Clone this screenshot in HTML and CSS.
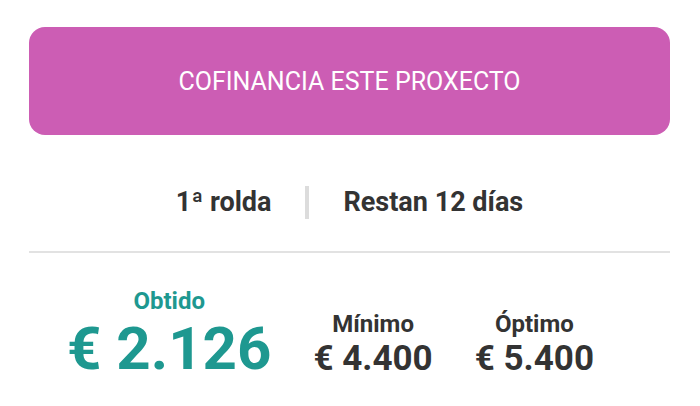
FILE: index.html
```html
<!DOCTYPE html>
<html lang="gl">

<head>
    <meta charset="UTF-8">
    <meta name="viewport" content="width=device-width, initial-scale=1.0">
    <title>Cofinancia</title>
    <link rel="stylesheet" href="styles.css">
</head>

<body>
    <div class="panel">
        <button class="cta">COFINANCIA ESTE PROXECTO</button>

        <div class="round">
            <span>1ª rolda</span>
            <span class="sep"></span>
            <span>Restan 12 días</span>
        </div>

        <div class="amounts">
            <div class="amount main">
                <div class="label">Obtido</div>
                <div class="value">€ 2.126</div>
            </div>
            <div class="amount">
                <div class="label">Mínimo</div>
                <div class="value">€ 4.400</div>
            </div>
            <div class="amount">
                <div class="label">Óptimo</div>
                <div class="value">€ 5.400</div>
            </div>
        </div>
    </div>
</body>

</html>
```

FILE: styles.css
```css
html,
body {
    height: 100%;
}

body {
    margin: 0;
    background: #fff;
    font-family: Roboto, "Liberation Sans", sans-serif;
    color: #333;
}

.panel {
    padding: 27px 30px 0 29px;
}

.cta {
    display: block;
    width: 100%;
    height: 108px;
    border: none;
    border-radius: 16px;
    background-color: #cc5db4;
    color: #fff;
    font-family: inherit;
    font-size: 25px;
    font-weight: 400;
}

.round {
    display: flex;
    justify-content: center;
    align-items: center;
    gap: 34px;
    height: 118px;
    padding-top: 18px;
    border-bottom: 2px solid #e2e2e2;
    font-size: 27px;
    font-weight: 700;
    box-sizing: border-box;
}

.sep {
    width: 4px;
    height: 33px;
    background-color: #dcdcdc;
}

.amounts {
    display: flex;
    align-items: flex-end;
    padding: 0 0 0 38px;
    gap: 42px;
}

.amount {
    text-align: center;
    font-weight: 700;
}

.amount .label {
    font-size: 24px;
    line-height: 28px;
}

.amount .value {
    font-size: 35px;
}

.amount.main {
    color: #1e9890;
    margin-top: 34px;
}

.amount.main .label {
    margin-bottom: 4px;
}

.amount.main .value {
    font-size: 60px;
    line-height: 60px;
}
```
